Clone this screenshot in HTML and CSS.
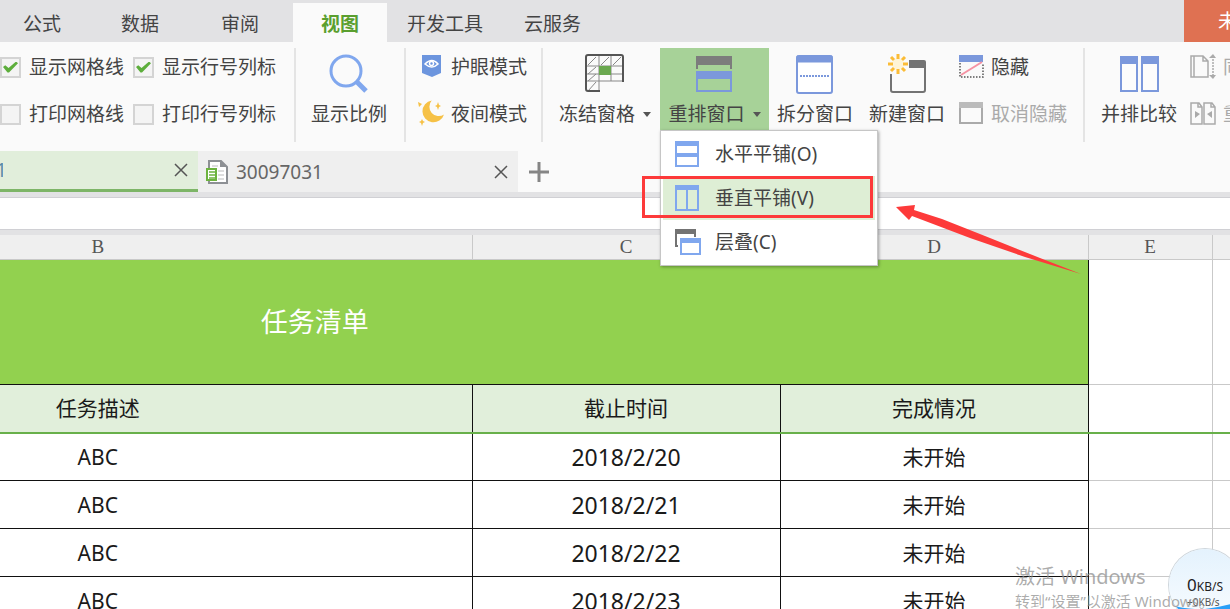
FILE: index.html
```html
<!DOCTYPE html>
<html lang="zh-CN">
<head>
<meta charset="utf-8">
<title>任务清单</title>
<link rel="stylesheet" href="styles.css">
</head>
<body>
<div class="app">
  <nav class="menubar">
    <button class="menu-item first">公式</button>
    <button class="menu-item">数据</button>
    <button class="menu-item">审阅</button>
    <button class="menu-item active">视图</button>
    <button class="menu-item tools">开发工具</button>
    <button class="menu-item cloud">云服务</button>
    <button class="login">未登录</button>
  </nav>

  <div class="ribbon">
    <div class="group checks">
      <label class="check"><input type="checkbox" checked>显示网格线</label>
      <label class="check"><input type="checkbox" checked>显示行号列标</label>
      <label class="check"><input type="checkbox">打印网格线</label>
      <label class="check"><input type="checkbox">打印行号列标</label>
    </div>

    <div class="group zoom-group">
      <button class="big">
        <svg class="big-icon" width="42" height="52" viewBox="0 0 42 52" fill="none" stroke="#80a7ee">
          <circle cx="18" cy="23" r="15" stroke-width="3"/><path d="M28 33l10 10" stroke-width="5"/>
        </svg>
        <span>显示比例</span>
      </button>
    </div>

    <div class="group modes">
      <button class="small">
        <svg width="26" height="28" viewBox="0 0 26 28"><path d="M4 2h19v18l-9 4-10-4z" fill="#6c95de"/><path d="M7 11q7-7 13 0q-6 6-13 0z" fill="none" stroke="#fff" stroke-width="1.5"/><circle cx="13.500" cy="10.500" r="2" fill="none" stroke="#fff" stroke-width="1.500"/></svg>
        <span>护眼模式</span>
      </button>
      <button class="small">
        <svg width="26" height="28" viewBox="0 0 26 28" fill="#f6c146"><path d="M13.700 .5A9.400 9.400 0 0 0 26 14.500A11 11 0 1 1 13.700 .5z"/><path d="M20 2l1 3 2 1-2 1-1 3-1-3-2-1 2-1zM4 19l1 2 2 1-2 1-1 3-1-3-2-1 2-1zM0 2l4 2-3 3z"/></svg>
        <span>夜间模式</span>
      </button>
    </div>

    <div class="group windows">
      <button class="big freeze">
        <svg class="big-icon" width="42" height="52" viewBox="0 0 42 52" fill="none" stroke="#888">
          <path d="M2 18h38M2 26h38M2 33h38M15 8v36M27 8v25M4 17l8-8M17 17l8-8M29 17l8-8M4 26l8-7M4 33l8-7M4 43l8-9"/>
          <path d="M15 18h12v9H15z" fill="#6aa84f" stroke="none"/>
          <path d="M16 43H4q-2 0-2-2V9q0-2 2-2h33q2 0 2 2v25" stroke="#555" stroke-width="2"/>
        </svg>
        <span class="with-arrow">冻结窗格</span>
      </button>
      <div class="arrange-wrap">
        <button class="big arrange" aria-expanded="true">
          <svg class="big-icon" width="42" height="52" viewBox="0 0 42 52" fill="none">
            <path d="M2 8h36v9H2z" fill="#7c7c7c"/><path d="M3 12v9M37 12v9" stroke="#7c7c7c" stroke-width="2"/>
            <path d="M3 24h34v19H3z" stroke="#7b98dc" stroke-width="2"/><path d="M2 23h36v8H2z" fill="#7b98dc"/>
          </svg>
          <span class="with-arrow">重排窗口</span>
        </button>
        <div class="dropdown" role="menu">
          <button class="drop-item" role="menuitem">
            <svg width="26" height="28" viewBox="0 0 26 28"><path d="M1 2h22v24H1z" fill="#fff" stroke="#80a7ee" stroke-width="2"/><path d="M0 1h24v5H0zM0 13h24v4H0z" fill="#80a7ee"/></svg>
            <span>水平平铺(O)</span>
          </button>
          <button class="drop-item hover" role="menuitem">
            <svg width="26" height="28" viewBox="0 0 26 28"><path d="M1 2h22v24H1zM12 4v22" fill="none" stroke="#80a7ee" stroke-width="2"/><path d="M0 1h24v5H0z" fill="#80a7ee"/></svg>
            <span>垂直平铺(V)</span>
          </button>
          <button class="drop-item" role="menuitem">
            <svg width="26" height="28" viewBox="0 0 26 28"><path d="M0 1h21v5H0z" fill="#737373"/><path d="M3 18H1V4M20 4v5" fill="none" stroke="#737373" stroke-width="2"/><path d="M6 11h19v15H6z" fill="#fff" stroke="#80a7ee" stroke-width="2"/><path d="M5 10h21v5H5z" fill="#80a7ee"/></svg>
            <span>层叠(C)</span>
          </button>
        </div>
      </div>
      <button class="big split">
        <svg class="big-icon" width="42" height="52" viewBox="0 0 42 52" fill="none" stroke="#7b98dc">
          <rect x="3" y="8" width="35" height="37" rx="2" stroke-width="2" fill="#fff"/><path d="M3 8h35v6H3z" fill="#7b98dc" stroke-width="1"/><path d="M6 28h30" stroke-width="2" stroke-dasharray="2 1"/>
        </svg>
        <span>拆分窗口</span>
      </button>
      <button class="big new">
        <svg class="big-icon" width="42" height="52" viewBox="0 0 42 52" fill="none">
          <path d="M5 26v16q0 2 2 2h30q2 0 2-2V14" stroke="#737373" stroke-width="2"/><path d="M23 12h15q2 0 2 2v6H23z" fill="#737373"/>
          <circle cx="12" cy="16" r="6" fill="#fff4d5"/><path d="M12 6v5M12 21v5M2 16h5M17 16h5M5 9l3 3M16 20l3 3M19 9l-3 3M8 20l-3 3" stroke="#fbbc36" stroke-width="3"/>
        </svg>
        <span>新建窗口</span>
      </button>
      <div class="pair">
        <button class="small">
          <svg width="26" height="28" viewBox="0 0 26 28" fill="none"><path d="M1 2h24v7H1z" fill="#7b98dc"/><path d="M2 10v14h23V10" stroke="#555" stroke-width="1.500" stroke-dasharray="1.500 1.500"/><path d="M3 22L24 9" stroke="#f592a3" stroke-width="2"/></svg>
          <span>隐藏</span>
        </button>
        <button class="small" disabled>
          <svg width="26" height="28" viewBox="0 0 26 28" fill="none"><path d="M2 3h22v20H2z" stroke="#aaa" stroke-width="2"/><path d="M1 2h24v6H1z" fill="#bbb"/></svg>
          <span>取消隐藏</span>
        </button>
      </div>
    </div>

    <div class="group compare">
      <button class="big">
        <svg class="big-icon" width="42" height="52" viewBox="0 0 42 52" fill="#fcfcfc" stroke="#7b98dc" stroke-width="2"><path d="M3 9h16v34H3zM24 9h16v34H24z"/><path d="M3 9h16v6H3zM24 9h16v6H24z" fill="#7b98dc"/></svg>
        <span>并排比较</span>
      </button>
      <div class="pair">
        <button class="small" disabled>
          <svg width="26" height="28" viewBox="0 0 26 28" fill="none" stroke="#aaa" stroke-width="1.500"><path d="M1 3v21h17V8l-5-5zM4 3v21M13 3v5h5"/><path d="M23 6v16" stroke-dasharray="2 1"/><path d="M19 5h7l-3-4zM19 22h7l-3 4z" fill="#aaa" stroke="none"/></svg>
          <span>同步滚动</span>
        </button>
        <button class="small" disabled>
          <svg width="26" height="28" viewBox="0 0 26 28" fill="none" stroke="#aaa" stroke-width="1.500"><path d="M1 3v21h11V7L9 3zM14 3v21h11V7l-3-4zM8 3v4h4M21 3v4h4"/><path d="M5 11v7l5-4zM22 11v7l-5-4z" fill="#aaa" stroke="none"/></svg>
          <span>重设位置</span>
        </button>
      </div>
    </div>
  </div>

  <div class="doc-tabs">
    <div class="doc-tab current">
      <span class="doc-name">1</span>
      <button class="close" aria-label="关闭"><svg width="14" height="14" viewBox="0 0 14 14"><path d="M1 1l12 12M13 1L1 13" stroke="#555" stroke-width="1.500"/></svg></button>
    </div>
    <div class="doc-tab">
      <svg width="24" height="26" viewBox="0 0 24 26" fill="none"><path d="M4 2h12l6 6v16H4z" fill="#fff" stroke="#8d9094" stroke-width="2"/><path d="M15 1v7h7z" fill="#8d9094"/><path d="M7 7h6M13 12h6M13 16h6M13 20h6" stroke="#bbb"/><path d="M2 10h9v11H2z" fill="#fff" stroke="#6db33f" stroke-width="2"/><path d="M4 13h6M4 16h6M4 19h6" stroke="#6db33f" stroke-width="1.500"/></svg>
      <span class="doc-title">30097031</span>
      <button class="close" aria-label="关闭"><svg width="14" height="14" viewBox="0 0 14 14"><path d="M1 1l12 12M13 1L1 13" stroke="#555" stroke-width="1.500"/></svg></button>
    </div>
    <button class="add" aria-label="新建"><svg width="20" height="20" viewBox="0 0 20 20"><path d="M10 0v20M0 10h20" stroke="#858585" stroke-width="3"/></svg></button>
  </div>

  <input class="formula" type="text" aria-label="编辑栏">

  <div class="sheet">
    <table class="grid">
      <colgroup><col class="col-b"><col class="col-c"><col class="col-d"><col class="col-e"><col></colgroup>
      <thead>
        <tr class="letters"><th class="task">B</th><th>C</th><th>D</th><th>E</th><th></th></tr>
      </thead>
      <tbody>
        <tr class="title-row"><td class="title" colspan="3">任务清单</td><td></td><td></td></tr>
        <tr class="head-row"><th class="task">任务描述</th><th>截止时间</th><th>完成情况</th><td></td><td></td></tr>
        <tr class="first-row"><td class="task">ABC</td><td class="date">2018/2/20</td><td class="state">未开始</td><td></td><td></td></tr>
        <tr><td class="task">ABC</td><td class="date">2018/2/21</td><td class="state">未开始</td><td></td><td></td></tr>
        <tr><td class="task">ABC</td><td class="date">2018/2/22</td><td class="state">未开始</td><td></td><td></td></tr>
        <tr><td class="task">ABC</td><td class="date">2018/2/23</td><td class="state">未开始</td><td></td><td></td></tr>
      </tbody>
    </table>
  </div>

  <svg class="callout" width="442" height="104" viewBox="0 0 442 104">
    <rect x="3.500" y="3.500" width="228" height="39" fill="none" stroke="#fd3a3a" stroke-width="3"/>
    <path d="M256 33L275 31L274 36L302 45L345 62L400 84L441 100L385 83L330 64L272 42L269 46z" fill="#fd3a3a"/>
  </svg>

  <div class="meter">
    <svg class="wave" width="72" height="72" viewBox="0 0 72 72"><path d="M0 56Q22 61 36 60Q54 58 72 52V72H0z" fill="#2ba0f8"/></svg>
    <div class="rate"><span class="rate-num">0</span>KB/S</div>
    <div class="rate-up">+0KB/s</div>
  </div>
  <div class="watermark">
    <div class="wm-title">激活 Windows</div>
    <div class="wm-text">转到“设置”以激活 Windows。</div>
  </div>
</div>
</body>
</html>
```

FILE: styles.css
```css
* { box-sizing: border-box; }
body {
  margin: 0;
  font-family: "Noto Sans", "Noto Sans CJK SC", sans-serif;
  font-size: 19px;
  line-height: 28px;
  color: #444;
  overflow: hidden;
}
button {
  font: inherit;
  color: inherit;
  background: none;
  border: 0;
  padding: 0;
  white-space: nowrap;
}
svg { display: block; flex: none; }
.app {
  position: relative;
  display: flex;
  flex-direction: column;
  height: 100vh;
  overflow: hidden;
  background: #fafafa;
}

.menubar {
  display: flex;
  height: 42px;
  background: #e2e2e4;
  overflow: hidden;
}
.menu-item { flex: none; padding: 5px 31px 0; }
.menu-item.first { padding-left: 23px; padding-right: 29px; }
.menu-item.active {
  margin: 3px 0 0 3px;
  padding: 2px 28px 0;
  background: #fafafa;
  color: #5a9f2f;
  font-weight: bold;
}
.menu-item.tools { padding-left: 20px; padding-right: 20px; }
.menu-item.cloud { padding-left: 21px; }
.login {
  width: 46px;
  margin-left: auto;
  padding-left: 34px;
  overflow: hidden;
  text-align: left;
  background: #df7152;
  color: #fff;
}

.ribbon {
  display: flex;
  flex: none;
  height: 109px;
  padding: 6px 0 9px;
}
.group {
  display: flex;
  flex: none;
  align-items: flex-start;
  border-right: 2px solid #e4e4e4;
}
.group.checks {
  display: grid;
  grid-template-columns: 133px 161px;
  grid-template-rows: 38px 38px;
  row-gap: 9px;
  align-items: center;
}
.check { display: flex; align-items: center; gap: 8px; white-space: nowrap; }
.check input {
  appearance: none;
  flex: none;
  width: 21px;
  height: 21px;
  margin: 0;
  background: #f4f4f4;
  border: 2px solid #d4d4d4;
}
.check input:checked::before {
  content: "";
  display: block;
  width: 15px;
  height: 11px;
  margin: 3px 1px;
  background: #5dae3c;
  clip-path: polygon(0 50%, 15% 35%, 37% 60%, 87% 0, 100% 17%, 40% 100%, 30% 100%);
}
.big { display: flex; flex: none; flex-direction: column; align-items: center; height: 83px; }
.big span { display: block; }
.with-arrow::after {
  content: "";
  display: inline-block;
  margin-left: 8px;
  vertical-align: 4px;
  border: 4px solid transparent;
  border-top: 5px solid #555;
  border-bottom: 0;
}
.small { display: flex; align-items: center; gap: 7px; height: 38px; }
.small:disabled { color: #aaa; }
.modes, .pair { display: grid; grid-template-rows: 38px 38px; row-gap: 9px; align-content: start; }
.zoom-group { padding: 0 17px 0 15px; }
.modes { padding: 0 14px 0 12px; }
.freeze { margin-left: 16px; }
.arrange-wrap { position: relative; margin-left: 9px; }
.arrange { width: 109px; background: #a7d298; }
.split { margin-left: 8px; }
.new { margin-left: 16px; }
.windows .pair { margin: 0 16px 0 13px; }
.compare { border: 0; padding-left: 16px; }
.compare .pair { margin-left: 13px; }

.dropdown {
  position: absolute;
  z-index: 2;
  left: 0;
  top: 82px;
  width: 218px;
  padding: 1px 2px;
  background: #fff;
  border: 1px solid #c6c6c6;
  box-shadow: 1px 1px 3px rgba(0, 0, 0, 0.35);
}
.drop-item {
  display: flex;
  align-items: center;
  gap: 14px;
  width: 100%;
  height: 44px;
  padding-left: 12px;
}
.drop-item.hover { background: #deeed5; }

.doc-tabs { display: flex; flex: none; height: 41px; }
.doc-tab {
  display: flex;
  align-items: center;
  width: 320px;
  padding: 0 10px 0 7px;
  background: #efefef;
}
.doc-tab.current {
  width: 198px;
  padding-left: 0;
  background: #e1eedb;
  border-bottom: 3px solid #7db567;
}
.doc-name { width: 3px; overflow: hidden; text-indent: -4px; color: #5a8aa8; }
.doc-title { margin-left: 7px; color: #666; }
.close { margin-left: auto; }
.add { margin-left: 11px; }

.formula {
  flex: none;
  width: 100%;
  height: 43px;
  padding: 0 8px;
  font: inherit;
  border: solid #e2e2e4;
  border-width: 5px 0;
  outline: 0;
  background: #fff;
  box-shadow: inset 0 1px #d0d0d4, inset 0 -1px #d0d0d4;
}

.sheet { flex: 1; min-height: 0; overflow: hidden; background: #fff; }
.grid {
  width: 100%;
  table-layout: fixed;
  border-collapse: collapse;
  color: #1a1a1a;
  font-size: 21px;
}
.col-b { width: 472px; }
.col-c, .col-d { width: 308px; }
.col-e { width: 124px; }
.grid th { font-weight: normal; }
.grid th, .grid td { height: 48px; padding: 0; text-align: center; border: 1px solid #c9c9c9; border-left: 0; }
.grid tr > :last-child { border-right: 0; }
.grid tbody tr > :nth-child(-n+3):not(:empty) { border-color: #111; }
.grid .task { padding-right: 276px; }
.grid .letters th {
  height: 24px;
  background: #efefef;
  border-top: 0;
  font-family: "Liberation Serif", serif;
  font-size: 19px;
  line-height: 24px;
  color: #555;
}
.grid .title-row td { height: 125px; }
.grid .title-row .title {
  padding-right: 458px;
  background: #92d14f;
  border-top-color: #c9c9c9;
  color: #fff;
  font-size: 27px;
}
.grid .head-row th { background: #e1efdb; }
.grid tbody .head-row > :nth-child(n):nth-child(n) { border-bottom: 2px solid #68b04a; }
.grid tbody .first-row > :nth-child(n):nth-child(n) { border-top: 2px solid #68b04a; }
.grid .date { font-size: 23px; }

.callout { position: absolute; z-index: 3; left: 640px; top: 174px; }

.meter {
  position: absolute;
  left: 1169px;
  top: 549px;
  width: 72px;
  height: 72px;
  padding-top: 26px;
  overflow: hidden;
  border-radius: 50%;
  background: linear-gradient(#e4f2fd, #f8fcff);
  box-shadow: 0 0 0 1px #cfd6dc;
  color: #222;
}
.wave { position: absolute; left: 0; top: 0; }
.rate, .rate-up { position: relative; padding-left: 18px; font-size: 12px; line-height: 20px; white-space: nowrap; }
.rate-num { font-size: 17px; }
.rate-up { font-size: 10px; line-height: 10px; color: #555; }
.watermark { position: absolute; left: 1015px; top: 563px; color: rgba(145, 145, 145, 0.75); white-space: nowrap; }
.wm-title { font-size: 20px; line-height: 28px; }
.wm-text { font-size: 15px; line-height: 20px; }
```
